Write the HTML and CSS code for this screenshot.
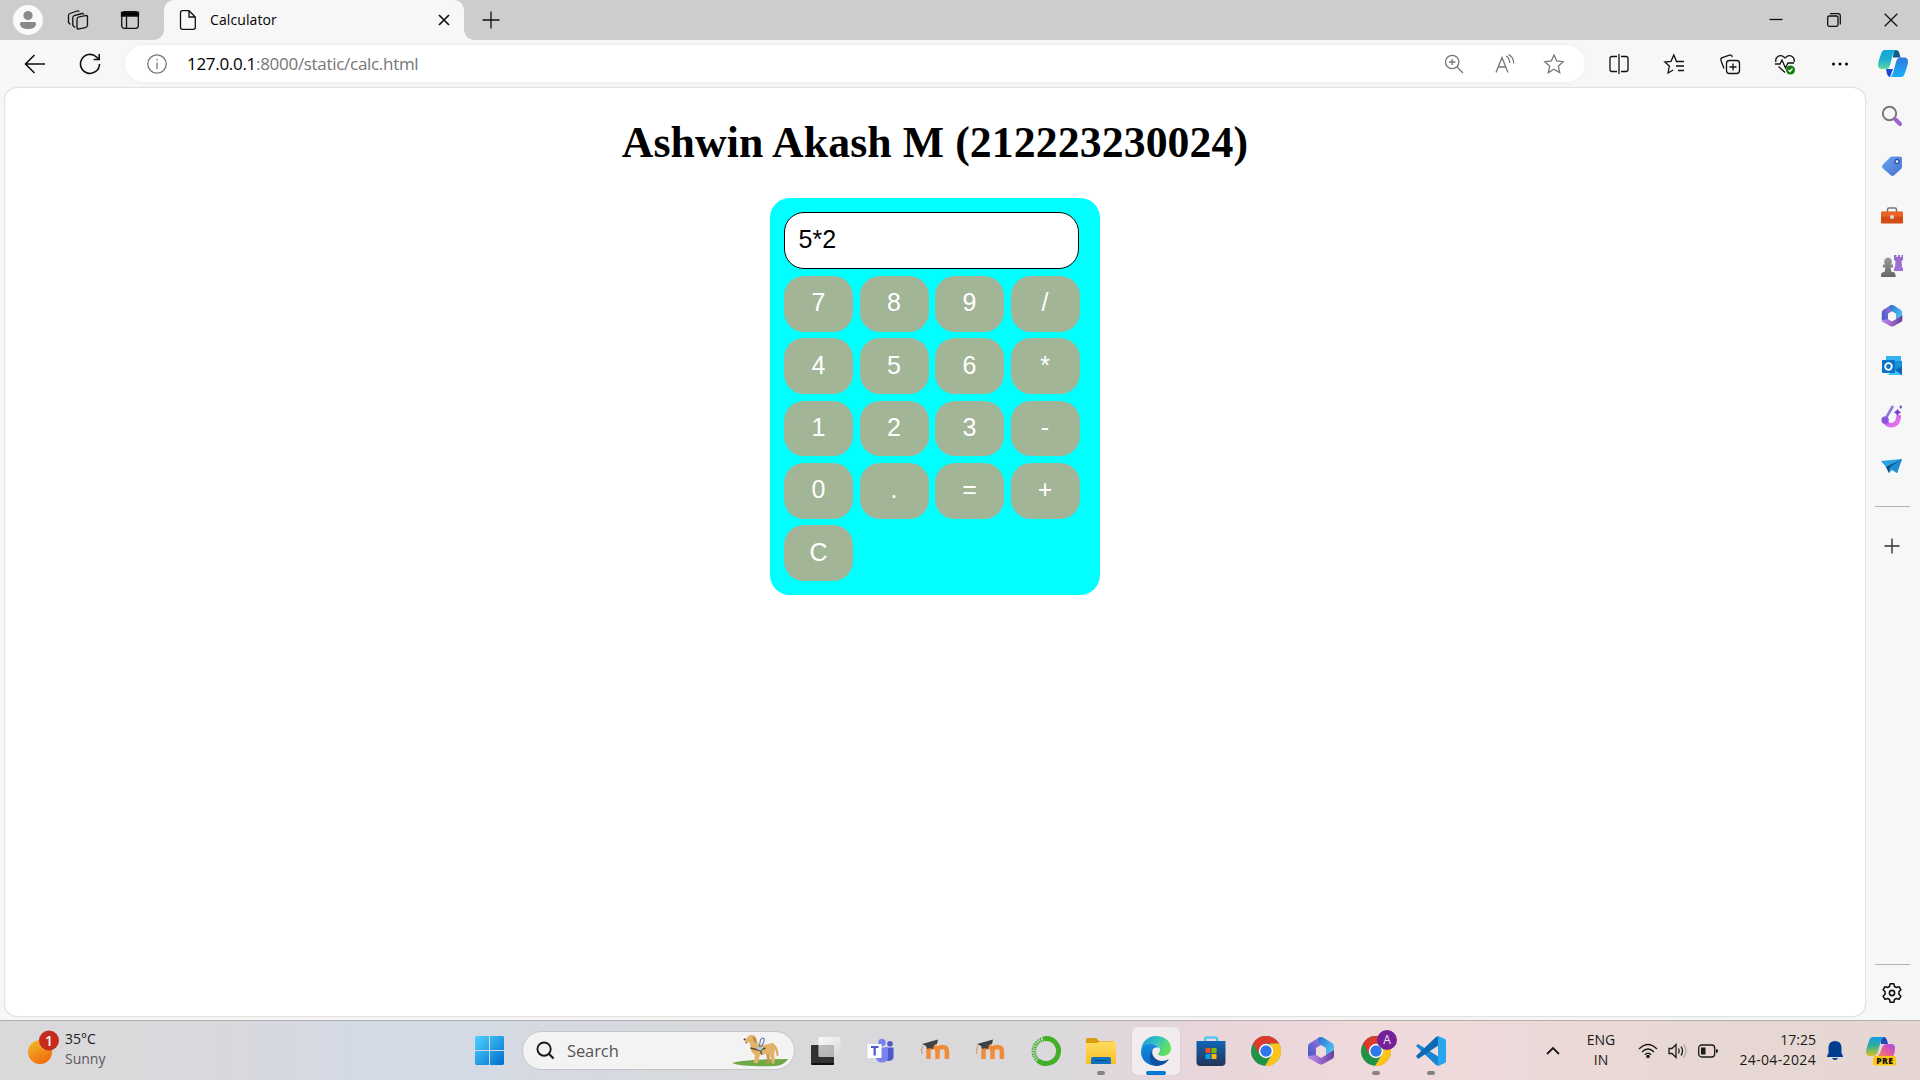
FILE: index.html
```html
<!DOCTYPE html>
<html lang="en">
<head>
<meta charset="utf-8">
<title>Calculator</title>
<link rel="stylesheet" href="styles.css">
</head>
<body>
<svg class="defs" width="0" height="0">
  <defs>
    <linearGradient id="sun" x1="0" y1="0" x2=".6" y2="1"><stop offset="0" stop-color="#eec22e"/><stop offset="1" stop-color="#f36a0c"/></linearGradient>
    <linearGradient id="win" x1="0" y1="0" x2="1" y2="1"><stop offset="0" stop-color="#4fd3fe"/><stop offset=".9" stop-color="#0577d3"/></linearGradient>
    <linearGradient id="cop1" x1="0" y1="0" x2="0" y2="1"><stop offset="0" stop-color="#12a5d8"/><stop offset=".5" stop-color="#1db1cf"/><stop offset="1" stop-color="#5fd8a0"/></linearGradient>
    <linearGradient id="cop2" x1="0" y1="0" x2="0" y2="1"><stop offset="0" stop-color="#2c79dc"/><stop offset="1" stop-color="#19b0fa"/></linearGradient>
    <linearGradient id="pre1" x1="0" y1="0" x2="0" y2="1"><stop offset="0" stop-color="#1598e8"/><stop offset=".45" stop-color="#2fae9c"/><stop offset="1" stop-color="#d3c521"/></linearGradient>
    <linearGradient id="pre2" x1="1" y1="0" x2="0" y2="1"><stop offset="0" stop-color="#a04cf0"/><stop offset=".5" stop-color="#e35b9c"/><stop offset="1" stop-color="#f88a55"/></linearGradient>
    <linearGradient id="tag" x1="0" y1="0" x2="1" y2="1"><stop offset="0" stop-color="#6ba5f0"/><stop offset="1" stop-color="#4370cc"/></linearGradient>
    <linearGradient id="grey" x1="0" y1="0" x2="0" y2="1"><stop offset="0" stop-color="#999"/><stop offset="1" stop-color="#666"/></linearGradient>
    <linearGradient id="rook" x1="0" y1="0" x2="0" y2="1"><stop offset="0" stop-color="#9b6bd0"/><stop offset="1" stop-color="#a371db"/></linearGradient>
    <linearGradient id="edgeTop" x1="0" y1="0" x2="1" y2=".4"><stop offset="0" stop-color="#1c93d5"/><stop offset=".5" stop-color="#2fc0c8"/><stop offset="1" stop-color="#62e25a"/></linearGradient>
    <linearGradient id="edgeLow" x1="0" y1="0" x2="0" y2="1"><stop offset="0" stop-color="#128be0"/><stop offset="1" stop-color="#0a6cc4"/></linearGradient>
    <linearGradient id="folder" x1="0" y1="0" x2="0" y2="1"><stop offset="0" stop-color="#ffdc62"/><stop offset="1" stop-color="#fbbe24"/></linearGradient>
    <linearGradient id="store" x1="0" y1="0" x2="0" y2="1"><stop offset="0" stop-color="#1065b4"/><stop offset="1" stop-color="#243559"/></linearGradient>
    <linearGradient id="magic" x1="0" y1="0" x2="1" y2="1"><stop offset="0" stop-color="#b45cf0"/><stop offset="1" stop-color="#ef72f0"/></linearGradient>
    <linearGradient id="ma" x1="0" y1="1" x2="1" y2="0"><stop offset="0" stop-color="#3956c4"/><stop offset="1" stop-color="#a275e2"/></linearGradient>
    <linearGradient id="mb" x1="0" y1="0" x2="1" y2="1"><stop offset="0" stop-color="#2672cc"/><stop offset="1" stop-color="#5bd2fb"/></linearGradient>
    <linearGradient id="mc" x1="0" y1="0" x2="1" y2="0"><stop offset="0" stop-color="#c28ef0"/><stop offset="1" stop-color="#6a3e9c"/></linearGradient>
    <linearGradient id="glass" x1="0" y1="0" x2="1" y2="1"><stop offset="0" stop-color="#fff"/><stop offset="1" stop-color="#d8d8d8"/></linearGradient>
    <symbol id="m365" viewBox="0 0 28 28">
      <g stroke="none">
        <path d="M13 0 3 6Q1 7 1 10v9q0 2 2 3l6-3v-8l5-3V0z" fill="url(#ma)"/>
        <path d="M11 1q3-2 6 0l8 5q2 1 2 4v9l-8-1v-7l-5-3-3-3z" fill="url(#mb)"/>
        <path d="M27 13v6q0 2-2 3l-9 5q-2 1-4 0l-9-5q-2-1-2-3l8-1 5 3 5-3z" fill="url(#mc)"/>
        <path d="m14 8.500 5 3v5.500l-5 3-5-3v-5.500z" class="hole"/>
      </g>
    </symbol>
    <symbol id="chrome" viewBox="0 0 30 30">
      <circle cx="15" cy="15" r="15" fill="#219346"/>
      <path d="M2 7.5A15 15 0 0 1 28 7.5H15L8.5 18.5z" fill="#dd3a2e"/>
      <path d="M28 7.5A15 15 0 0 1 14 30L21.5 17.5 19 7.5z" fill="#fcc31d"/>
      <circle cx="15" cy="15" r="7.2" fill="#fff"/><circle cx="15" cy="15" r="5.7" fill="#2f78ea"/>
    </symbol>
    <symbol id="moodle" viewBox="0 0 32 24">
      <path d="M8.500 20v-8q0-4 4.500-4t4.500 4v8M17.500 12q0-4 4.700-4t4.700 4v8" fill="none" stroke="#ef8b39" stroke-width="4.500"/>
      <path d="M2 5 18 .5 17 5l-3 1-1 4q-3-1.500-6 0L6 7z" fill="#414141"/><path d="m3 7-1.500 4 .5 4" fill="none" stroke="#d9a58c" stroke-width="1.500"/>
    </symbol>
  </defs>
</svg>

<header class="tabstrip">
  <svg class="avatar" viewBox="0 0 30 30"><circle cx="15" cy="15" r="15" fill="#fafafa"/><circle cx="15" cy="10.500" r="4.600" fill="#8a8a8a"/><path d="M8.500 17h13q1.500 0 1.500 1.500c0 4-3.500 5.500-8 5.500s-8-1.500-8-5.500q0-1.500 1.500-1.500z" fill="#8a8a8a"/></svg>
  <svg class="i22 workspaces" viewBox="0 0 22 22"><rect x="10" y="7.500" width="10.500" height="12" rx="2" transform="skewY(-12) translate(0 3)"/><path d="M8.200 18.500 5.800 16.500V8.500q0-1.500 1.500-2l7.500-2q1.500-.3 2 1M3.500 15.500l-2-2V6.500Q1.500 5 3 4.500l7-2.500q1.500-.5 2 .8"/></svg>
  <svg class="i20 tabaction" viewBox="0 0 20 20"><rect x="1.700" y="1.700" width="16.600" height="16.600" rx="2.500"/><path d="M1.500 2.500h17V6h-17z" fill="#000"/><path d="M6.500 6v12"/></svg>
  <div class="tab">
    <svg class="i20" viewBox="0 0 20 20"><path d="M4.500.7H11L17.300 7v10.300q0 2-2 2h-10.800q-2 0-2-2V2.700q0-2 2-2zM11 .7V7h6.300"/></svg>
    <span class="tab-title">Calculator</span>
    <svg class="i12" viewBox="0 0 12 12"><path d="m1 1 10 10M11 1 1 11"/></svg>
  </div>
  <svg class="i20 newtab" viewBox="0 0 20 20"><path d="M1.500 10h17M10 1.500v17"/></svg>
  <div class="window-buttons">
    <svg viewBox="0 0 14 14"><path d="M.5 6.500h13"/></svg>
    <svg viewBox="0 0 14 14"><rect x=".7" y="3" width="10.300" height="10.300" rx="1.500"/><path d="M3 .7h8q2.300 0 2.300 2.300v8.500"/></svg>
    <svg viewBox="0 0 14 14"><path d="m.7.700 12.600 12.600M13.300.7.700 13.300"/></svg>
  </div>
</header>

<nav class="toolbar">
  <svg class="i22 back" viewBox="0 0 22 22"><path d="M21 11H1.500M10.500 2l-9 9 9 9"/></svg>
  <svg class="i22 reload" viewBox="0 0 22 22"><path d="M20.500 11a9.500 9.500 0 1 1-3-7l2.500 2.500M20.200 1v5.500h-5.500"/></svg>
  <div class="address">
    <svg class="i20 thin" viewBox="0 0 20 20"><circle cx="10" cy="10" r="9.200"/><path d="M10 8.500V15M10 5v1.500"/></svg>
    <span class="url"><b>127.0.0.1</b>:8000/static/calc.html</span>
    <svg class="i20 thin zoomicon" viewBox="0 0 20 20"><circle cx="8.200" cy="8" r="6.700"/><path d="m13 13 6 6M5 8h6.400M8.200 5v6"/></svg>
    <svg class="i20 thin read" viewBox="0 0 20 20"><path d="m1 18.500 6-15 6 15M3.200 13h7.600M11 2q3.500 1.500 3.800 7M13.500.5q5 2.500 5.300 9"/></svg>
    <svg class="i20 thin" viewBox="0 0 20 20"><path d="m10 1 2.700 6 6.500.7-4.800 4.400 1.300 6.500L10 15.300l-5.700 3.300 1.300-6.500L.8 7.700 7.300 7z"/></svg>
  </div>
  <div class="tools">
    <svg class="i20" viewBox="0 0 20 20"><path d="M8 2.500H3q-2 0-2 2v11q0 2 2 2h5M12 2.500h5q2 0 2 2v11q0 2-2 2h-5M10 0v20"/></svg>
    <svg class="i20" viewBox="0 0 20 20"><path d="M17 7.500h-4.500L9.800 1 7 7.300.8 8l4.500 4-1.200 7 5-3M14 7.500h6M12 12h8M14 16.500h6"/></svg>
    <svg class="i20" viewBox="0 0 20 20"><path d="M4 14.500 1 6.500Q.3 4.500 2.300 3.700L9.500 1.200Q11.500.5 12.300 3"/><rect x="6.500" y="6.500" width="13" height="13" rx="3"/><path d="M13 9.500v7M9.500 13h7"/></svg>
    <svg class="i20" viewBox="0 0 20 20"><path d="M1 8C-.5 3 5 0 8.500 2.700L10 4l1.500-1.300C15 0 20.500 3 19 8M0 10h5l2-4 3.500 8 2.500-5h6M3.500 12.500 10 18.500"/><circle cx="15.500" cy="16" r="4.500" fill="#107c10" stroke="none"/><path d="m13.500 16 1.500 1.500 2.500-3" stroke="#fff"/></svg>
    <svg class="i20" viewBox="0 0 20 20"><g fill="#000" stroke="none"><circle cx="3.500" cy="10" r="1.500"/><circle cx="10" cy="10" r="1.500"/><circle cx="16.500" cy="10" r="1.500"/></g></svg>
  </div>
  <svg class="copilot" viewBox="0 0 30 27"><path d="M16 0h2q2.500 0 3.200 2.500l1.300 5H15z" fill="#0c5c86"/><path d="M7 0h11q-2 1-3 4l-3 11q-1 4-4 4H4q-4 0-4-4Q0 12 3 4 4 0 7 0z" fill="url(#cop1)"/><path d="M8 19h7l-3 8q-2 0-3-3z" fill="#1749d2"/><path d="M23 7.500h3q4 0 4 4 0 3-3 11-1 4.500-4 4.500H12q2-1 3-4l3-11q1-4.500 5-4.500z" fill="url(#cop2)"/></svg>
</nav>

<div class="workspace">
  <main class="page">
    <h1>Ashwin Akash M (212223230024)</h1>
    <section class="calculator">
      <div class="display">5*2</div>
      <div class="keys">
        <button>7</button><button>8</button><button>9</button><button>/</button>
        <button>4</button><button>5</button><button>6</button><button>*</button>
        <button>1</button><button>2</button><button>3</button><button>-</button>
        <button>0</button><button>.</button><button>=</button><button>+</button>
        <button>C</button>
      </div>
    </section>
  </main>
  <aside class="sidebar">
    <div class="apps">
      <svg viewBox="0 0 22 22"><circle cx="8.500" cy="8.500" r="6.700" stroke="#777" stroke-width="2"/><path d="m14.500 14.500 4.500 4.500" stroke="#9a62d0" stroke-width="4" stroke-linecap="round"/></svg>
      <svg viewBox="0 0 22 22"><path d="M11 1.500h8q2 0 2 2v8q0 1.500-1 2.500l-6.500 6q-2 2-4 0L2 13.500q-2-2 0-4L9 2.500q1-1 2-1z" fill="url(#tag)" stroke="none"/><circle cx="16" cy="6.500" r="2" fill="#fff" stroke="#2f4f9c"/></svg>
      <svg viewBox="0 0 22 22"><path d="M6.500 7V4.500q0-1.500 1.500-1.500h6q1.500 0 1.500 1.500V7" stroke="#777" stroke-width="1.500"/><rect y="6.500" width="22" height="12" rx="1" fill="#d14c16" stroke="none"/><path d="M0 7h22v4.500H0z" fill="#ed6324" stroke="none"/><circle cx="11" cy="12" r="2" fill="#ddd" stroke="none"/></svg>
      <svg viewBox="0 0 22 22"><path d="M13 0h2.500v2H17V0h2v2h1.500V0H22v5l-1.500 1 .7 7H22v3h-9v-3l1-1 .5-6L13 5z" fill="url(#rook)" stroke="none"/><path d="M7 2.500a4 4 0 0 1 2.500 7H12v3H9.500l1 4.500h2q2 1 2 3v2H0v-2q0-2 2-3h1.500l1-4.500H2v-3h2.500A4 4 0 0 1 7 2.500z" fill="url(#grey)" stroke="none"/></svg>
      <svg viewBox="0 0 22 22"><use href="#m365" width="22" height="22"/></svg>
      <svg viewBox="0 0 22 22"><path d="M5 1h15v15H5z" fill="#31b4ef" stroke="none"/><path d="M13 6h8v9h-8z" fill="#1491dc" stroke="none"/><path d="M6 20 21 11v9z" fill="#35c5f6" stroke="none"/><path d="m14 15 7-4v9z" fill="#1066b4" stroke="none"/><rect x="1" y="5" width="13" height="13" rx="1" fill="#0873c9" stroke="none"/><circle cx="7.500" cy="11.500" r="3.300" stroke="#fff" stroke-width="1.800"/></svg>
      <svg viewBox="0 0 22 24"><path d="M3 16q2 6 7 6 8 0 8.500-11" stroke="url(#magic)" stroke-width="5"/><path d="m11.500 2-7 12" stroke="#8f76e0" stroke-width="3" stroke-linecap="round"/><circle cx="3.500" cy="16.500" r="4" fill="#8d51df" stroke="none"/><path d="m17 4 1.500 2.500L21 8l-2.500 1.500L17 12l-1.500-2.500L13 8l2.500-1.500zM20.500 0l1.500 2.200-1.500 2.200L19 2.200z" fill="#793bd6" stroke="none"/></svg>
      <svg viewBox="0 0 22 22"><path d="m0 6 21-2-5 14-5-3-3 3-3-6z" fill="#2ba3e6" stroke="none"/><path d="M21 4 5 12l3 6 1-5z" fill="#144e7c" stroke="none"/><path d="M21 4 9 12l7 6z" fill="#1c8dd0" stroke="none"/></svg>
    </div>
    <hr>
    <svg class="add" viewBox="0 0 16 16"><path d="M.5 8h15M8 .5v15" stroke-width="1.400"/></svg>
    <hr class="lower">
    <svg class="gear" viewBox="0 0 20 20"><path d="M8.200.8h3.600l.7 2.700 1.800 1 2.700-.8 1.900 3.100-2 2v2.400l2 2-1.900 3.100-2.700-.8-1.800 1-.7 2.700H8.200l-.7-2.700-1.800-1-2.700.8-1.900-3.100 2-2V8.800l-2-2L3 3.700l2.700.8 1.800-1z" stroke-linejoin="round"/><circle cx="10" cy="10" r="2.600"/></svg>
  </aside>
</div>

<footer class="taskbar">
  <div class="weather">
    <svg viewBox="0 0 34 36"><circle cx="12" cy="22" r="12" fill="url(#sun)"/><circle cx="21" cy="10.500" r="10" fill="#c42b1c"/><text x="21" y="15.700" text-anchor="middle" class="badge">1</text></svg>
    <p><span>35°C</span><span class="sub">Sunny</span></p>
  </div>
  <svg class="start" viewBox="0 0 29 29"><path d="M1 0h13v14H0V1zM15 0h13l1 1v13H15zM0 15h14v14H1l-1-1zM15 15h14v13l-1 1H15z" fill="url(#win)"/></svg>
  <div class="search">
    <svg class="lens" viewBox="0 0 20 20"><circle cx="8.500" cy="8.500" r="7" fill="none" stroke="#1b1b1b" stroke-width="2"/><path d="m13.500 13.500 5 5" stroke="#1b1b1b" stroke-width="2.200"/></svg>
    <span>Search</span>
    <svg class="dog" viewBox="0 0 56 32">
      <path d="M0 28q12-4 56-4-4 6-12 7-34 1-44-3z" fill="#70a847"/>
      <path d="M40 9q5 3 5.500 11" fill="none" stroke="#dba95e" stroke-width="2.200" stroke-linecap="round"/>
      <path d="M12 4.500 15 3q1-3 4.500-3 4 0 5 4l1.500 5q6 2 12-.5 5-.5 5 5 0 4-1 5.500l1 5-.5 4.500h-3l.2-4-3.200-6q-5 1.500-8.500 1L26 28h-4.500l.5-2 1-6q-4.500-3-4.500-8l-.5-4-5-1.500z" fill="#e2b46b"/>
      <path d="m37 19 1 6-1 3.500h-3l1.500-3-1.500-7z" fill="#c99447"/>
      <path d="M20.500 1.500q4.500 0 4 6.500-3.500-.5-4-6.500z" fill="#c18a3f"/>
      <path d="m18.500 13 9 2.500 6-2.500M28 11l1.500 8.500" stroke="#6b4425" stroke-width="1.400" fill="none"/>
      <path d="m27 12 1.500-7q2-3 3.500-1.500.8 2-2.500 8" fill="none" stroke="#7684a5" stroke-width="1.200"/>
      <path d="M26 12h5l-1.500 3.500-4-.5z" fill="#9ed2ec"/>
      <circle cx="12.500" cy="4.300" r=".9" fill="#3b2a1c"/><path d="M13 7h2.500l-1.500 2z" fill="#d9546a"/>
    </svg>
  </div>
  <div class="pins">
    <div class="pin"><svg viewBox="0 0 30 30"><rect y="9" width="23" height="20" rx="1" fill="#31312f"/><path d="M0 27h23v1l-1 1H1z" fill="#111"/><rect x="7.500" y="1" width="22" height="20" rx="1" fill="url(#glass)" opacity=".85"/><path d="M7.500 9H23v12H7.500z" fill="#777" opacity=".25"/></svg></div>
    <div class="pin"><svg viewBox="0 0 30 30"><circle cx="16" cy="6.500" r="3.700" fill="#7b83eb"/><circle cx="24" cy="7.800" r="2.800" fill="#5059c9"/><path d="M19 11.500h8.500v9q0 4-4.500 4.500-4 0-4-4z" fill="#5059c9"/><path d="M10 11.500h12v9q0 6-6 6t-6-6z" fill="#7b83eb"/><rect x="1.500" y="8" width="14" height="14" fill="#fff"/><path d="M5 11h7.500M8.700 11v8.500" stroke="#5059c9" stroke-width="2.200"/></svg></div>
    <div class="pin"><svg viewBox="0 0 30 30"><use href="#moodle" x="-1" y="3" width="32" height="24"/></svg></div>
    <div class="pin"><svg viewBox="0 0 30 30"><use href="#moodle" x="-1" y="3" width="32" height="24"/></svg></div>
    <div class="pin"><svg viewBox="0 0 30 30"><path d="M13 2.700A12.500 12.500 0 1 1 7 24.600" fill="none" stroke="#43b02a" stroke-width="5"/><path d="M13 3A12.500 12.500 0 0 0 7 24.600" fill="none" stroke="#43b02a" stroke-width="4.500" stroke-dasharray="1.600 .8"/><path d="M12 3A12.500 12.500 0 0 0 6 24" fill="none" stroke="#dcdbdf" stroke-width="1" stroke-dasharray="2 1.500"/></svg></div>
    <div class="pin open"><svg viewBox="0 0 30 30"><path d="M0 3.500Q0 2 1.500 2H10l3 3h15v4H0z" fill="#dc9d0c"/><path d="M0 7h11l3-1.500h14.500Q30 5.500 30 7v21H0z" fill="url(#folder)"/><path d="M5 28v-5q0-2 2-2h16q2 0 2 2v5z" fill="#1271bf"/><path d="M9 24.500h12" stroke="#0b4c86"/></svg></div>
    <div class="pin active"><svg viewBox="0 0 30 30"><path d="M0 16C0 6 7 0 15 0c9 0 15 6 15 12 0 5-4 8-8 8-3 0-5-1-5-2 0-1 2-2 2-4 0-3-3-6-8-6S1 12 0 16z" fill="url(#edgeTop)"/><path d="M0 16C1 10 5 8 10 8q6 0 8 4-4-2-7 2c-4 6 0 14 8 15C9 32 0 25 0 16z" fill="url(#edgeLow)"/><path d="M12 13c-3 6 3 12 9 12q4 0 7-2c-3 5-8 7-13 7C8 28 6 19 12 13z" fill="#0c529c"/></svg></div>
    <div class="pin"><svg viewBox="0 0 30 30"><path d="M9 6V3q0-1.500 1.500-1.500h9q1.500 0 1.500 1.500v3" fill="none" stroke="#39c5f5" stroke-width="2"/><path d="M.5 5h29v21q0 4-4 4h-21q-4 0-4-4z" fill="url(#store)"/><path d="M9.500 12h5v5h-5z" fill="#f25022"/><path d="M15.500 12h5v5h-5z" fill="#7fba00"/><path d="M9.500 18h5v5h-5z" fill="#00a4ef"/><path d="M15.500 18h5v5h-5z" fill="#ffb900"/></svg></div>
    <div class="pin"><svg viewBox="0 0 30 30"><use href="#chrome" width="30" height="30"/></svg></div>
    <div class="pin"><svg viewBox="0 0 30 30" class="onpink"><use href="#m365" x="1" y="1" width="28" height="28"/></svg></div>
    <div class="pin open"><svg viewBox="0 0 30 30"><use href="#chrome" width="30" height="30"/><circle cx="26" cy="4" r="10" fill="#74219a"/><text x="26" y="8.300" text-anchor="middle" class="initial">A</text></svg></div>
    <div class="pin open"><svg viewBox="0 0 30 30"><path d="m2 8-2 2 20 19 3 1V21z" fill="#1687d0"/><path d="m0 20 2 3L23 9V0l-3 1z" fill="#0a6bb4"/><path d="m22 0 7 3 1 1.500v21L29 27l-7 3z" fill="#29a4ee"/></svg></div>
  </div>
  <div class="tray">
    <svg class="chev" viewBox="0 0 14 8"><path d="m1 7 6-6 6 6" stroke-width="1.800"/></svg>
    <p class="lang"><span>ENG</span><span>IN</span></p>
    <svg class="wifi" viewBox="0 0 20 16"><path d="M1 6q9-9 18 0M4 9q6-6 12 0M6.800 11.800q3.200-3 6.400 0"/><circle cx="10" cy="13.500" r="1.800" fill="#1a1a1a" stroke="none"/></svg>
    <svg class="sound" viewBox="0 0 20 16"><path d="M1 5.500h3l4-4v13l-4-4H1zM10.500 5.500q1.500 2.500 0 5M13 3.500q3 4.500 0 9"/><path d="M15.500 1.500q5 6.500 0 13" stroke="#aaa"/></svg>
    <svg class="battery" viewBox="0 0 20 14"><rect x=".7" y="1" width="16" height="12" rx="3"/><path d="M3 3.500h4.500v7H3zM18 5q2 0 2 2t-2 2z" fill="#1a1a1a" stroke="none"/></svg>
    <p class="clock"><span>17:25</span><span class="date">24-04-2024</span></p>
    <svg class="bell" viewBox="0 0 16 20"><path d="M8 0q6 0 6.500 6v6l1.500 3v1H0v-1l1.500-3V6Q2 0 8 0zM5 17h6q-1 2-3 2t-3-2z" fill="#013e92" stroke="none"/></svg>
    <svg class="pre" viewBox="0 0 30 29"><g stroke="none"><path d="M14 0h4q2 0 3 3l1 4h-7z" fill="#1e46b8"/><path d="M7 0h11q-2 1-3 4l-3 10q-1 5-5 5H4q-4 0-4-4Q0 12 3 4 4 0 7 0z" fill="url(#pre1)"/><path d="M21 7h4q4 0 4 4 0 5-2 9H10q3-1 4-4l2-5q1-4 5-4z" fill="url(#pre2)"/><rect x="7" y="19" width="23" height="9.500" rx="2.500" fill="#fcc70c"/></g><text x="18.800" y="27" text-anchor="middle">PRE</text></svg>
  </div>
</footer>
</body>
</html>
```
FILE: styles.css
```css
* { box-sizing: border-box; }
body { margin: 0; height: 1080px; overflow: hidden; display: flex; flex-direction: column; background: #f7f7f7; color: #000; font-family: "Open Sans", sans-serif; }
svg { flex: none; display: block; overflow: visible; }
p { margin: 0; }
.defs { position: absolute; }
.i22 { width: 22px; height: 22px; }
.i20 { width: 20px; height: 20px; }
.i12 { width: 12px; height: 12px; }

.tabstrip svg, .toolbar svg, .sidebar svg, .tray svg { fill: none; stroke: #111; stroke-width: 1.3; }
.tabstrip .avatar, .toolbar .copilot { stroke: none; }

.tabstrip { height: 40px; flex: none; display: flex; align-items: center; background: #cdcdcd; }
.avatar { width: 30px; height: 30px; margin-left: 13px; }
.workspaces { margin-left: 24px; }
.tabaction { margin-left: 31px; }
.tab { width: 300px; height: 40px; margin-left: 24px; padding: 0 14px; display: flex; align-items: center; background: #f7f7f7; border-radius: 10px 10px 0 0; position: relative; }
.tab::before, .tab::after { content: ""; position: absolute; bottom: 0; width: 10px; height: 10px; }
.tab::before { left: -10px; background: radial-gradient(circle at 0 0, #cdcdcd 9.5px, #f7f7f7 10px); }
.tab::after { right: -10px; background: radial-gradient(circle at 100% 0, #cdcdcd 9.5px, #f7f7f7 10px); }
.tab-title { flex: 1; margin-left: 12px; font-size: 14px; letter-spacing: .1px; line-height: 20px; }
.tab .i12 { stroke-width: 1.7; }
.newtab { margin-left: 17px; }
.window-buttons { margin-left: auto; margin-right: 22px; display: flex; gap: 43.5px; }
.window-buttons svg { width: 14px; height: 14px; }

.toolbar { height: 47px; flex: none; display: flex; align-items: center; }
.toolbar .back { margin-left: 24px; }
.toolbar .reload { margin-left: 33px; }
.toolbar .i22 { stroke-width: 1.6; }
.address { width: 1460px; height: 37px; margin-left: 24px; padding: 0 21px 0 22px; display: flex; align-items: center; background: #fff; border-radius: 19px; box-shadow: 0 0 5px #0000000d; }
.toolbar .thin { stroke: #767676; }
.url { flex: 1; margin-left: 20px; font-size: 17px; letter-spacing: -.3px; line-height: 24px; color: #767676; }
.url b { font-weight: 400; color: #000; }
.zoomicon { margin-right: 31px; }
.read { margin-right: 29px; }
.tools { display: flex; gap: 35.3px; margin-left: 24px; }
.copilot { width: 30px; height: 27px; margin-left: 28px; }

.workspace { height: 933px; flex: none; display: flex; padding: 1px 0 4px 5px; }
.page { width: 1860px; background: #fff; border-radius: 12px; box-shadow: 0 0 2px #0000004d; display: flex; flex-direction: column; align-items: center; }
h1 { margin: 29px 0 0; font: bold 43.75px/50px "Liberation Serif", serif; letter-spacing: .1px; }
.calculator { width: 330px; height: 397px; margin-top: 31px; padding: 14px 21px 14px 14px; background: #0ff; border-radius: 20px; }
.display { height: 57px; margin-bottom: 7px; padding: 0 14px 2px 13.5px; display: flex; align-items: center; border: 1px solid #000; border-radius: 20px; background: #fff; font: 25px "Liberation Sans", sans-serif; }
.keys { display: grid; grid-template-columns: repeat(4, 69px); grid-auto-rows: 55.8px; gap: 6.5px; }
.keys button { padding: 0 0 2px; border: 0; border-radius: 20px; background: #a2b596; color: #fff; font: 25px "Liberation Sans", sans-serif; }

.sidebar { width: 55px; display: flex; flex-direction: column; align-items: center; padding: 17px 1px 0 0; }
.sidebar svg { stroke: #333; }
.apps { display: flex; flex-direction: column; gap: 28px; }
.apps svg { width: 22px; height: 22px; }
.hole { fill: var(--hole, #f7f7f7); }
.sidebar hr { width: 35px; height: 1px; margin: 29px 0 0; border: 0; background: #b3b3b3; }
.sidebar .add { width: 16px; height: 16px; margin-top: 31px; }
.sidebar .lower { margin-top: auto; }
.sidebar .gear { width: 20px; height: 20px; margin: 18px 0 13px; stroke: #111; stroke-width: 1.6; }

.taskbar { height: 60px; flex: none; display: flex; align-items: center; border-top: 1px solid #b1aeae; background: linear-gradient(90deg, #d9d9da 0, #d9d8dc 220px, #d3dae6 370px, #d4dae4 460px, #d8d9db 750px, #dad9dc 1050px, #e9d6da 1210px, #f0dadb 1420px, #ecd9d9 1530px, #e7d8d3 1720px, #e6d6d4 1920px); }
.taskbar p { display: flex; flex-direction: column; margin-top: -1px; font-size: 14px; line-height: 20px; color: #1a1a1a; }
.weather { display: flex; width: 446px; padding: 0 0 3px 28px; }
.weather svg { width: 34px; height: 36px; }
.weather p { margin-left: 3px; }
.weather .sub { color: #5a5a5c; }
.badge { font: 600 14px "Open Sans", sans-serif; fill: #fff; }
.start { width: 29px; height: 29px; margin-left: 29px; }
.search { width: 273px; height: 39px; margin-left: 18px; padding: 0 6px 0 13px; display: flex; align-items: center; background: #f3f3f4; border: 1px solid #c5c5c8; border-radius: 20px; font-size: 16.5px; color: #555; }
.search span { flex: 1; margin-left: 12px; letter-spacing: -.1px; }
.lens { width: 19px; height: 19px; }
.dog { width: 56px; height: 32px; }
.pins { display: flex; gap: 7px; margin-left: 7px; }
.pin { width: 48px; height: 48px; display: flex; flex-direction: column; align-items: center; padding-top: 9px; border-radius: 5px; }
.pin svg { width: 30px; height: 30px; }
.pin.active { background: #f1edef; box-shadow: 0 0 1px #0003; }
.pin.open::after, .pin.active::after { content: ""; width: 8px; height: 4px; margin-top: 5px; border-radius: 2px; background: #858284; }
.pin.active::after { width: 20px; background: #0078d4; }
.onpink { --hole: #f0dadb; }
.initial { font: 12px "Open Sans", sans-serif; fill: #f0e0f5; }
.tray { flex: 1; display: flex; align-items: center; margin-left: 91px; }
.tray svg { stroke: #1a1a1a; }
.chev { width: 14px; height: 8px; }
.taskbar .lang { width: 34px; margin-left: 24px; align-items: center; }
.wifi { width: 20px; height: 16px; margin-left: 20px; }
.sound { width: 20px; height: 16px; margin-left: 10px; }
.battery { width: 20px; height: 14px; margin-left: 10px; }
.taskbar .clock { width: 90px; margin-left: 8px; align-items: flex-end; }
.clock .date { letter-spacing: .35px; }
.bell { width: 16px; height: 20px; margin-left: 11px; }
.pre { width: 30px; height: 29px; margin-left: 23px; margin-top: 1px; }
.pre text { font: 800 8.5px "Open Sans", sans-serif; fill: #111; stroke: none; letter-spacing: .5px; }
```
